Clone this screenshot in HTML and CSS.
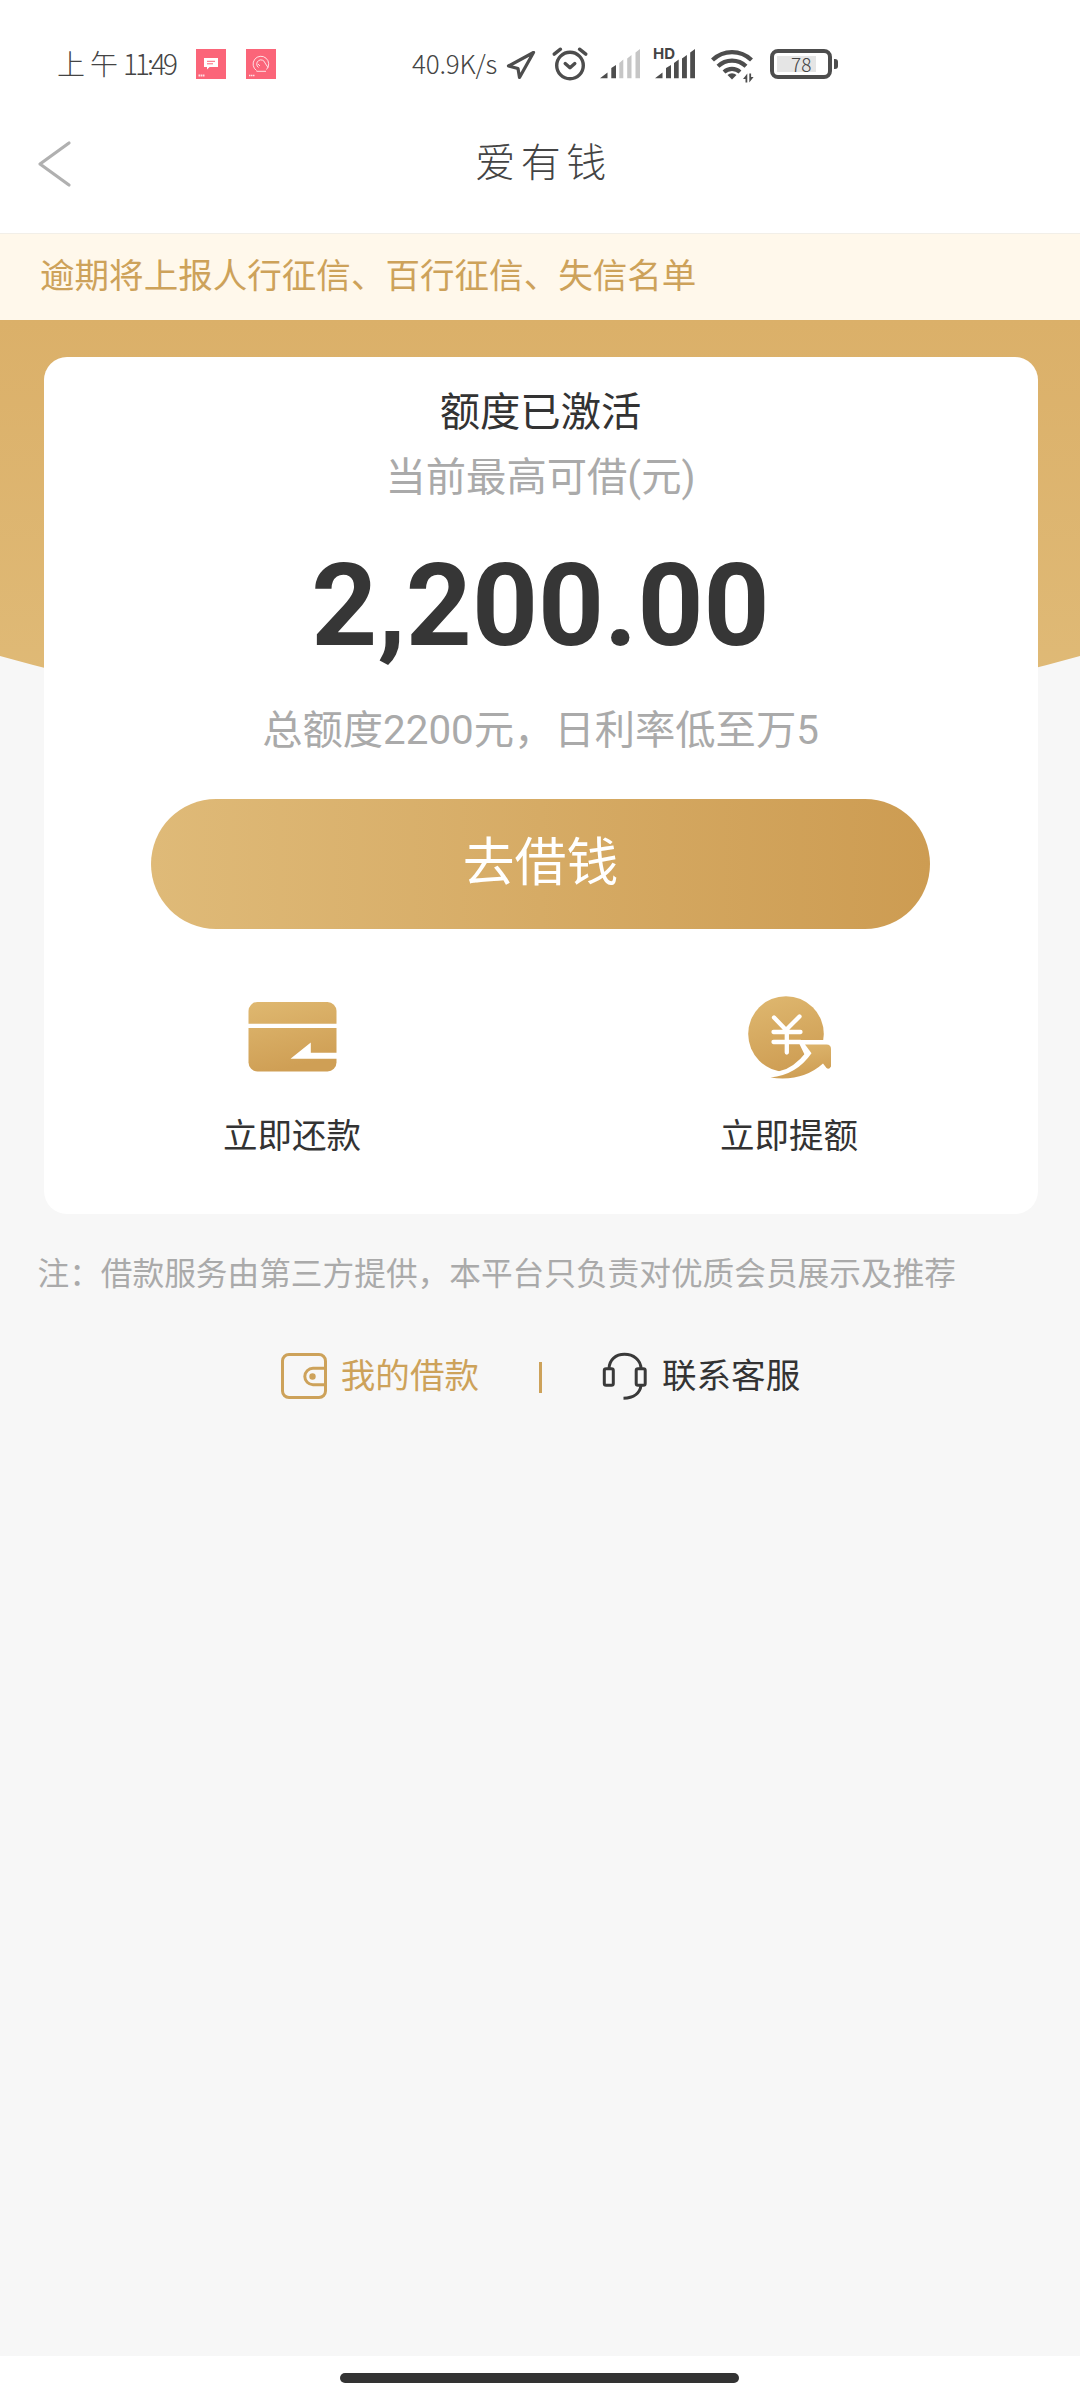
FILE: index.html
```html
<!DOCTYPE html>
<html lang="zh-CN">
<head>
<meta charset="utf-8">
<title>爱有钱</title>
<link rel="stylesheet" href="styles.css">
</head>
<body>
<div class="screen">
  <div class="status">
    <span class="clock"><span class="clock-period">上午</span>11:49</span>
    <svg class="app-badge" viewBox="0 0 30 30">
      <rect width="30" height="30" fill="#fb6579"/>
      <path d="M8 9h14v9H13.500l-2.500 2.500V18H8z" fill="#fff"/>
      <path d="M11 12.300h8M11 14.800h6" stroke="#fb6579" stroke-width="1"/>
      <path d="M2.500 26.500h6.500" stroke="#fff" stroke-width="2" stroke-dasharray="1.500 .5" opacity=".8"/>
    </svg>
    <svg class="app-badge app-badge-last" viewBox="0 0 30 30">
      <rect width="30" height="30" fill="#fb6579"/>
      <path d="M10.500 21.500A7.800 7.800 0 1 1 20.500 20.500M10.500 22.300h9.500" fill="none" stroke="#fff" stroke-width=".8"/>
      <path d="M12.500 18.500a4.200 4.200 0 1 1 6.500-4.500l3 4.500M12 15l2 2" fill="none" stroke="#fff" stroke-width=".8"/>
      <path d="M3 26.500h5.500" stroke="#fff" stroke-width="1.500" stroke-dasharray="1.500 .5" opacity=".8"/>
    </svg>
    <span class="speed">40.9K/s</span>
    <svg class="st-location" viewBox="0 0 30 30" fill="none" stroke="#4d4d4d" stroke-width="3.200" stroke-linejoin="round">
      <path d="M27.500 2.500 2.500 16l9.500 2.500 1.500 9z"/>
    </svg>
    <svg class="st-alarm" viewBox="0 0 36 36" fill="none" stroke="#4d4d4d" stroke-width="3.400" stroke-linecap="round" stroke-linejoin="round">
      <circle cx="18" cy="19.500" r="13.300"/>
      <path d="m13.200 17.500 4.800 4.200 4.800-4.200M2.200 8.200l6.300-5M33.800 8.200l-6.300-5"/>
    </svg>
    <svg class="st-signal" viewBox="0 0 40 30" fill="#4d4d4d">
      <path d="M0 29.300 7.500 23.500v5.800zM11.300 19l4.700-3v13.300h-4.700z"/>
      <path d="M19.300 14l4-3.500v18.800h-4zM27.200 9.500l4.300-3.500v23.300h-4.300zM35.500 3.500 40 0v29.300h-4.500z" fill="#c6c6c6"/>
    </svg>
    <div class="hd-signal">
      <span class="hd">HD</span>
      <svg class="st-signal-full" viewBox="0 0 40 30" fill="#4d4d4d">
        <path d="M0 29.300 7.500 23.500v5.800zM11 19l5-3v13.300h-5zM19 14l4.700-3.500v18.800h-4.700zM27 9.500l4.900-3.500v23.300h-4.900zM35.200 3.500 40 0v29.300h-4.800z"/>
      </svg>
    </div>
    <svg class="st-wifi" viewBox="0 0 44 34" fill="none" stroke="#4d4d4d" stroke-width="4.200">
      <path d="M1.500 11a28 28 0 0 1 39 0M7 17.300a20 20 0 0 1 28 0M13 23a12 12 0 0 1 16 0"/>
      <path d="m21 30.500-4.500-4.500a6.500 6.500 0 0 1 9 0z" fill="#4d4d4d" stroke="none"/>
      <path d="M36.300 24.500v9h-1.800v-3.500h-2.500zM38.300 33.500v-9h1.800v3.500h2.500z" fill="#4d4d4d" stroke="none"/>
    </svg>
    <div class="battery"><span class="battery-fill">78</span></div>
    <span class="battery-cap"></span>
  </div>

  <header class="titlebar">
    <svg class="back" viewBox="0 0 34 46" fill="none" stroke="#b0b0b0" stroke-width="3.200" stroke-linecap="round" stroke-linejoin="round">
      <path d="M31 2 2 23l29 21"/>
    </svg>
    <h1 class="title">爱有钱</h1>
  </header>

  <div class="notice">逾期将上报人行征信、百行征信、失信名单</div>

  <main class="content">
    <svg class="backdrop" viewBox="0 0 1080 420" preserveAspectRatio="none">
      <defs>
        <linearGradient id="gold" x1="0" y1="0" x2="0" y2="1">
          <stop offset="0" stop-color="#dbb069"/>
          <stop offset="1" stop-color="#e0bb78"/>
        </linearGradient>
      </defs>
      <path d="M0 0H1080V336Q540 487 0 336z" fill="url(#gold)"/>
    </svg>
    <section class="card">
      <p class="state">额度已激活</p>
      <p class="hint">当前最高可借(元)</p>
      <p class="amount">2,200.00</p>
      <p class="rate">总额度2200元，日利率低至万5</p>
      <button class="borrow">去借钱</button>
      <div class="actions">
        <div class="action">
          <svg class="action-icon" viewBox="0 0 100 82">
            <defs>
              <linearGradient id="tone" x1="0" y1="0" x2=".3" y2="1">
                <stop offset="0" stop-color="#dfb870"/>
                <stop offset="1" stop-color="#cf9f55"/>
              </linearGradient>
            </defs>
            <rect x="6.500" y="6" width="88" height="69.500" rx="9" fill="url(#tone)"/>
            <path d="M6 27.700h89v4.300H6zM95 56.700H68.800V46.500L48.500 62.800h46.500z" fill="#fff"/>
          </svg>
          <span>立即还款</span>
        </div>
        <div class="action">
          <svg class="action-icon" viewBox="-9.500 0 100 82">
            <circle cx="37.500" cy="38" r="37.800" fill="url(#tone)"/>
            <path d="M49 44H86V84H10Q38 82 56 58.500z" fill="#fff"/>
            <path d="M25.500 21.500 37.500 34 51 20.500M25 36h27M25 46H52M38.300 36v20.500" fill="none" stroke="#fff" stroke-width="4.300" stroke-linecap="round"/>
            <path d="M32 74.800Q45 72 58 56L50 46H56L63 57Q48 80 22 81.500z" fill="#fff"/>
            <path d="M56.500 48.500H78q4.500 0 4.500 4.500V70.500q-2 3.500-4.500 1.500L74.500 67.500Q54 86 22 81.500 48 79 63 57.300z" fill="url(#tone)"/>
          </svg>
          <span>立即提额</span>
        </div>
      </div>
    </section>
    <p class="note">注：借款服务由第三方提供，本平台只负责对优质会员展示及推荐</p>
    <div class="links">
      <a class="link link-gold">
        <svg class="link-icon" viewBox="0 0 46 46" fill="none" stroke="#cda25a" stroke-width="3">
          <rect x="1.500" y="1.500" width="43" height="43" rx="6.500"/>
          <path d="M44.500 15.300H32a8.200 8.200 0 0 0 0 16.400H44.500"/>
          <circle cx="31.500" cy="23.500" r="3.200" fill="#cda25a" stroke="none"/>
        </svg>
        <span>我的借款</span>
      </a>
      <span class="divider"></span>
      <a class="link">
        <svg class="link-icon" viewBox="0 0 46 46" fill="none" stroke="#3a3a3a" stroke-width="3">
          <path d="M7 16C7 6.500 14 1.300 22.500 1.300S39 6.500 39 16M39 32.500C38 40 32 45 21.500 45.300"/>
          <rect x="2.300" y="15.800" width="9" height="16.500" rx="1.800"/>
          <rect x="34.200" y="15.800" width="9" height="16.500" rx="1.800"/>
        </svg>
        <span>联系客服</span>
      </a>
    </div>
  </main>

  <div class="navbar"><span class="home-pill"></span></div>
</div>
</body>
</html>
```
FILE: styles.css
```css
* { box-sizing: border-box; }
body {
  margin: 0;
  background: #fff;
  font-family: Roboto, "Noto Sans CJK SC", sans-serif;
  color: #333;
}
p, h1 { margin: 0; font-weight: 400; }
svg { display: block; flex: none; overflow: visible; }
.screen {
  width: 1080px;
  height: 2400px;
  display: flex;
  flex-direction: column;
}

/* status bar */
.status {
  height: 128px;
  padding-left: 57px;
  display: flex;
  align-items: center;
  flex: none;
  font-family: "Noto Sans CJK SC", sans-serif;
  font-weight: 300;
  color: #444;
}
.clock {
  width: 139px;
  margin-top: -3px;
  font-size: 28px;
  letter-spacing: -3px;
  white-space: nowrap;
}
.clock-period { letter-spacing: 5px; }
.app-badge { width: 30px; height: 30px; margin-right: 20px; }
.app-badge-last { margin-right: 136px; }
.speed {
  width: 94px;
  margin-top: -3px;
  font-size: 26px;
  letter-spacing: -.200px;
  white-space: nowrap;
}
.st-location { width: 30px; height: 30px; margin: 1px 16px 0 0; }
.st-alarm { width: 36px; height: 36px; margin: 0 12px 0 0; }
.st-signal { width: 40px; height: 30px; margin-right: 13px; }
.hd-signal { position: relative; width: 42px; margin-right: 15px; }
.hd {
  position: absolute;
  left: 0;
  top: -3px;
  font: 700 15px/15px Inter, sans-serif;
}
.st-signal-full { width: 40px; height: 30px; margin-left: 2px; }
.st-wifi { width: 44px; height: 34px; margin: 3px 15px 0 1px; }
.battery {
  width: 62px;
  height: 30px;
  padding: 3px;
  border: 4px solid #4d4d4d;
  border-radius: 8px;
}
.battery-fill {
  display: block;
  width: 39px;
  height: 16px;
  padding-left: 14px;
  background: #e5e5e5;
  font-size: 19px;
  line-height: 15px;
}
.battery-cap {
  width: 4px;
  height: 10px;
  margin-left: 2px;
  border-radius: 0 3px 3px 0;
  background: #4d4d4d;
}

/* title bar */
.titlebar {
  height: 105px;
  padding: 13px 38px 0;
  display: grid;
  grid-template-columns: 34px 1fr 34px;
  align-items: start;
  flex: none;
}
.back { width: 34px; height: 46px; }
.title {
  padding-left: 7px;
  font: 300 40px/38px "Noto Sans CJK SC", sans-serif;
  letter-spacing: 5.500px;
  text-align: center;
  color: #444;
}

.notice {
  height: 87px;
  padding-left: 40px;
  flex: none;
  background: #fff8eb;
  border-top: 1px solid #f2efe8;
  color: #cda25a;
  font-size: 34.560px;
  line-height: 85px;
}

/* main area */
.content {
  position: relative;
  flex: 1;
  padding: 37px 42.500px 0 43.500px;
  background: #f7f7f7;
}
.backdrop { position: absolute; left: 0; top: 0; width: 1080px; height: 420px; }
.card {
  position: relative;
  height: 857px;
  padding-top: 23px;
  border-radius: 23px;
  background: #fff;
  text-align: center;
}
.state { font-size: 40.320px; line-height: 65px; }
.hint { font-size: 40.320px; line-height: 65px; color: #aaa; }
.amount {
  height: 190px;
  font-size: 115.200px;
  font-weight: 700;
  line-height: 192px;
  color: #363636;
}
.rate { font-size: 40.320px; line-height: 62px; color: #aaa; }
.borrow {
  display: block;
  width: 779px;
  height: 130px;
  margin: 37px auto 0;
  padding: 0;
  border: 0;
  border-radius: 65px;
  background: linear-gradient(90deg, #dfba78, #cd9c52);
  color: #fff;
  font: 400 51.840px/130px Roboto, "Noto Sans CJK SC", sans-serif;
}
.actions { display: grid; grid-template-columns: 1fr 1fr; padding-top: 67px; }
.action {
  display: flex;
  flex-direction: column;
  align-items: center;
  gap: 36px;
  font-size: 34.560px;
  line-height: 44px;
}
.action-icon { width: 100px; height: 82px; }
.note {
  margin: 39px 0 0 -6px;
  color: #aaa;
  font-size: 31.680px;
  line-height: 44px;
  white-space: nowrap;
}
.links {
  display: flex;
  align-items: center;
  justify-content: center;
  padding-top: 56px;
  font-size: 34.560px;
  line-height: 46px;
}
.link { display: flex; align-items: center; gap: 14px; }
.link-gold { color: #cda25a; }
.link-icon { width: 46px; height: 46px; }
.divider { width: 3px; height: 31px; margin: 3px 60px 0; background: #cda25a; }

.navbar {
  height: 44px;
  padding: 17px 0 0 340px;
  flex: none;
  background: #fff;
}
.home-pill {
  display: block;
  width: 399px;
  height: 10px;
  border-radius: 5px;
  background: #333;
}
```
